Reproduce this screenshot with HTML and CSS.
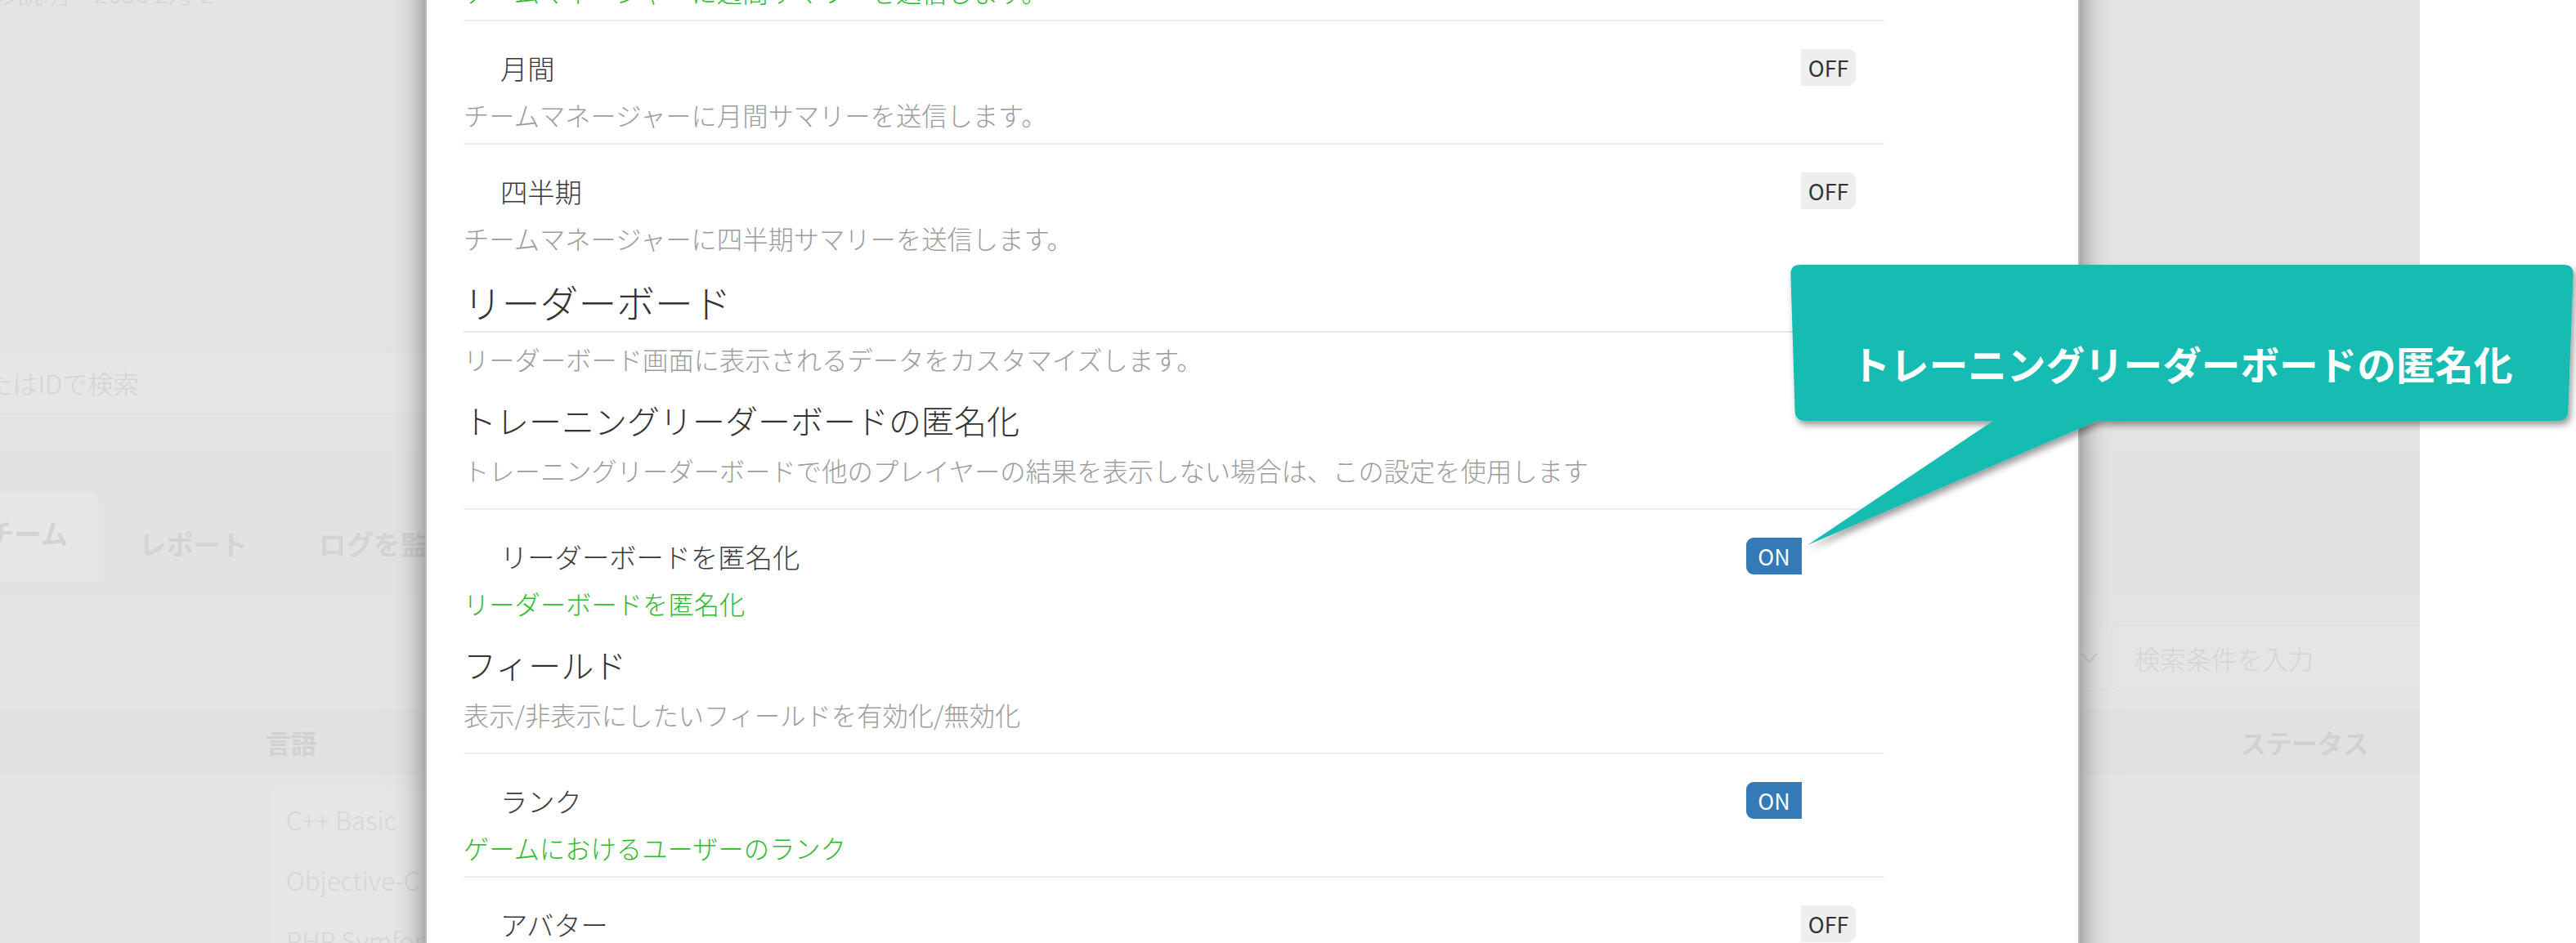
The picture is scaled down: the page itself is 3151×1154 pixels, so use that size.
FILE: index.html
```html
<!DOCTYPE html>
<html lang="ja">
<head>
<meta charset="utf-8">
<title>設定</title>
<link rel="stylesheet" href="styles.css">
</head>
<body>
<div class="page">
  <div class="page-inner">
    <div class="bg-top">の説明・2030 2月 2</div>
    <div class="bg-search">名前またはIDで検索</div>
    <div class="bg-tabs">
      <div class="tab active">チーム</div>
      <div class="tab">レポート</div>
      <div class="tab">ログを監視</div>
    </div>
    <div class="bg-filter">
      <div class="bg-select"><span class="chev"></span></div>
      <div class="bg-input">検索条件を入力</div>
    </div>
    <div class="bg-thead">
      <div class="th">言語</div>
      <div class="th"></div>
      <div class="th">ステータス</div>
    </div>
    <div class="bg-row"><div class="bg-cell">C++ Basic</div></div>
    <div class="bg-row"><div class="bg-cell">Objective-C iOS</div></div>
    <div class="bg-row"><div class="bg-cell">PHP Symfony</div></div>
  </div>
</div>

<div class="modal">
  <div class="row">
    <div class="row-head"><span class="label">週間</span><span class="switch"><span class="sw-on">ON</span><span class="sw-handle"></span></span></div>
    <p class="desc green">チームマネージャーに週間サマリーを送信します。</p>
  </div>
  <div class="row">
    <div class="row-head"><span class="label">月間</span><span class="switch"><span class="sw-handle"></span><span class="sw-off">OFF</span></span></div>
    <p class="desc">チームマネージャーに月間サマリーを送信します。</p>
  </div>
  <div class="row">
    <div class="row-head"><span class="label">四半期</span><span class="switch"><span class="sw-handle"></span><span class="sw-off">OFF</span></span></div>
    <p class="desc">チームマネージャーに四半期サマリーを送信します。</p>
  </div>

  <h2 class="legend">リーダーボード</h2>
  <p class="desc section-desc">リーダーボード画面に表示されるデータをカスタマイズします。</p>

  <h3 class="sub">トレーニングリーダーボードの匿名化</h3>
  <p class="desc sub-desc">トレーニングリーダーボードで他のプレイヤーの結果を表示しない場合は、この設定を使用します</p>
  <div class="row">
    <div class="row-head"><span class="label">リーダーボードを匿名化</span><span class="switch"><span class="sw-on">ON</span><span class="sw-handle"></span></span></div>
    <p class="desc green">リーダーボードを匿名化</p>
  </div>

  <h3 class="sub">フィールド</h3>
  <p class="desc sub-desc">表示/非表示にしたいフィールドを有効化/無効化</p>
  <div class="row">
    <div class="row-head"><span class="label">ランク</span><span class="switch"><span class="sw-on">ON</span><span class="sw-handle"></span></span></div>
    <p class="desc green">ゲームにおけるユーザーのランク</p>
  </div>
  <div class="row">
    <div class="row-head"><span class="label">アバター</span><span class="switch"><span class="sw-handle"></span><span class="sw-off">OFF</span></span></div>
  </div>
</div>

<div class="callout">
  <svg class="callout-shape" width="975" height="360" viewBox="0 0 975 360" xmlns="http://www.w3.org/2000/svg">
    <defs>
      <filter id="csh" x="-5%" y="-5%" width="110%" height="115%">
        <feDropShadow dx="3" dy="5" stdDeviation="4" flood-color="#000" flood-opacity="0.4"/>
      </filter>
    </defs>
    <path filter="url(#csh)" fill="#17bbb1" d="M22,6 L956,6 Q968,6 967.6,18 L961.4,185 Q961,197 949,197 L386,197 L31,349 L258,197 L28,197 Q16,197 15.6,185 L10.4,18 Q10,6 22,6 Z"/>
  </svg>
  <div class="callout-text">トレーニングリーダーボードの匿名化</div>
</div>
</body>
</html>
```

FILE: styles.css
```css
html, body {
  margin: 0;
  padding: 0;
}

body {
  width: 3151px;
  height: 1154px;
  overflow: hidden;
  position: relative;
  background: #ffffff;
  font-family: "Noto Sans CJK JP", "Noto Sans", sans-serif;
  font-weight: 300;
}

/* ---------- dimmed page behind the modal ---------- */
.page {
  width: 2960px;
  height: 1154px;
  background: #e4e4e4;
  overflow: hidden;
}

.page-inner {
  margin-left: -137px;
  width: 3097px;
  color: #d4d4d4;
  font-size: 31.3px;
}

.bg-top {
  margin-top: -31px;
  height: 44px;
  line-height: 44px;
  padding-left: 127px;
  white-space: nowrap;
}

.bg-search {
  margin-top: 417px;
  width: 2300px;
  height: 77px;
  box-sizing: border-box;
  border: 2px solid #e1e1e1;
  border-radius: 9px;
  background: #e6e6e6;
  display: flex;
  align-items: center;
  padding-left: 25px;
  white-space: nowrap;
}

.bg-tabs {
  margin-top: 44px;
  height: 177px;
  box-sizing: border-box;
  padding: 53px 0 0 83px;
  background: #e2e2e2;
  display: flex;
  align-items: flex-start;
  gap: 11px;
}

.tab {
  height: 108px;
  box-sizing: border-box;
  padding: 12px 38px 0;
  display: flex;
  align-items: center;
  font-size: 33.3px;
  font-weight: 700;
  color: #d3d3d3;
  white-space: nowrap;
}

.tab.active {
  padding: 0 38px 13px;
  background: #e7e7e7;
  border-radius: 9px 9px 0 0;
}

.bg-filter {
  margin-top: 37px;
  height: 81px;
  display: flex;
  justify-content: flex-end;
  gap: 4px;
}

.bg-select {
  width: 420px;
  box-sizing: border-box;
  border: 2px solid #e1e1e1;
  border-radius: 9px;
  background: #e5e5e5;
  position: relative;
}

.chev {
  position: absolute;
  right: 12px;
  top: 26px;
  width: 13px;
  height: 13px;
  border-right: 2px solid #d0d0d0;
  border-bottom: 2px solid #d0d0d0;
  transform: rotate(45deg);
}

.bg-input {
  width: 409px;
  margin-right: -30px;
  box-sizing: border-box;
  border: 2px solid #e1e1e1;
  border-radius: 9px;
  background: #e5e5e5;
  display: flex;
  align-items: center;
  padding-left: 28px;
  white-space: nowrap;
}

.bg-thead {
  margin-top: 22px;
  height: 80px;
  background: #e1e1e1;
  display: grid;
  grid-template-columns: 986px 1664px 612px;
  align-items: center;
  text-align: center;
  font-weight: 700;
  color: #d1d1d1;
}

.bg-row {
  height: 74px;
  padding-left: 468px;
  display: flex;
}

.bg-thead + .bg-row {
  margin-top: 17px;
}

.bg-cell {
  width: 620px;
  box-sizing: border-box;
  padding-left: 19px;
  background: #e6e6e6;
  display: flex;
  align-items: center;
  color: #d6d6d6;
  white-space: nowrap;
}

/* ---------- modal ---------- */
.modal {
  position: absolute;
  left: 520px;
  top: -141px;
  width: 2024px;
  height: 1420px;
  box-sizing: border-box;
  background: #ffffff;
  border: 2px solid rgba(0, 0, 0, 0.28);
  box-shadow: 0 11px 33px rgba(0, 0, 0, 0.5);
  padding: 0 237px 0 45px;
}

.row {
  margin-top: 12px;
  border-top: 2px solid #eeeeee;
  padding-top: 34px;
}

.row-head {
  display: flex;
  align-items: center;
  justify-content: space-between;
  height: 45px;
  padding-right: 34px;
}

.label {
  padding-left: 45px;
  font-size: 33.3px;
  line-height: 45px;
  color: #3a3a3a;
  white-space: nowrap;
}

.desc {
  margin: 14px 0 0;
  font-size: 31.3px;
  line-height: 44px;
  color: #9c9c9c;
  white-space: nowrap;
}

.desc.green {
  color: #2fb92f;
}

.legend {
  margin: 27px 0 0;
  padding-bottom: 8px;
  border-bottom: 2px solid #e5e5e5;
  font-size: 46.8px;
  line-height: 56px;
  font-weight: 300;
  color: #333333;
}

.section-desc {
  margin-top: 11px;
}

.sub {
  margin: 27px 0 0;
  font-size: 40px;
  line-height: 50px;
  font-weight: 300;
  color: #333333;
}

.sub-desc {
  margin-top: 15px;
  padding-bottom: 12px;
}

/* toggle switch */
.switch {
  display: flex;
  width: 135px;
  height: 45px;
  flex: none;
  font-size: 26.8px;
  font-weight: 400;
  line-height: 45px;
  text-align: center;
}

.sw-on {
  width: 68px;
  background: #337ab7;
  color: #ffffff;
  border-radius: 9px 0 0 9px;
}

.sw-off {
  width: 67px;
  background: #eeeeee;
  color: #333333;
  border-radius: 0 9px 9px 0;
}

.sw-handle {
  width: 67px;
  background: #ffffff;
}

/* ---------- callout annotation ---------- */
.callout {
  position: absolute;
  left: 2180px;
  top: 318px;
  width: 975px;
  height: 360px;
}

.callout-shape {
  position: absolute;
  left: 0;
  top: 0;
}

.callout-text {
  position: absolute;
  left: 10px;
  top: 97px;
  width: 958px;
  text-align: center;
  font-size: 47.6px;
  line-height: 60px;
  font-weight: 700;
  color: #ffffff;
  white-space: nowrap;
}
```
